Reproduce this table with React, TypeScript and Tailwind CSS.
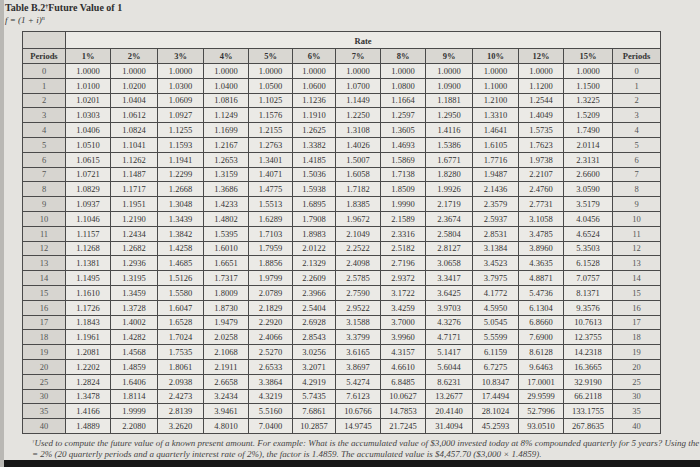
import React from "react";

const periods = [0,1,2,3,4,5,6,7,8,9,10,11,12,13,14,15,16,17,18,19,20,25,30,35,40];
const rates = ["1%","2%","3%","4%","5%","6%","7%","8%","9%","10%","12%","15%"];
const cols: string[][] = [
  "1.0000 1.0100 1.0201 1.0303 1.0406 1.0510 1.0615 1.0721 1.0829 1.0937 1.1046 1.1157 1.1268 1.1381 1.1495 1.1610 1.1726 1.1843 1.1961 1.2081 1.2202 1.2824 1.3478 1.4166 1.4889".split(" "),
  "1.0000 1.0200 1.0404 1.0612 1.0824 1.1041 1.1262 1.1487 1.1717 1.1951 1.2190 1.2434 1.2682 1.2936 1.3195 1.3459 1.3728 1.4002 1.4282 1.4568 1.4859 1.6406 1.8114 1.9999 2.2080".split(" "),
  "1.0000 1.0300 1.0609 1.0927 1.1255 1.1593 1.1941 1.2299 1.2668 1.3048 1.3439 1.3842 1.4258 1.4685 1.5126 1.5580 1.6047 1.6528 1.7024 1.7535 1.8061 2.0938 2.4273 2.8139 3.2620".split(" "),
  "1.0000 1.0400 1.0816 1.1249 1.1699 1.2167 1.2653 1.3159 1.3686 1.4233 1.4802 1.5395 1.6010 1.6651 1.7317 1.8009 1.8730 1.9479 2.0258 2.1068 2.1911 2.6658 3.2434 3.9461 4.8010".split(" "),
  "1.0000 1.0500 1.1025 1.1576 1.2155 1.2763 1.3401 1.4071 1.4775 1.5513 1.6289 1.7103 1.7959 1.8856 1.9799 2.0789 2.1829 2.2920 2.4066 2.5270 2.6533 3.3864 4.3219 5.5160 7.0400".split(" "),
  "1.0000 1.0600 1.1236 1.1910 1.2625 1.3382 1.4185 1.5036 1.5938 1.6895 1.7908 1.8983 2.0122 2.1329 2.2609 2.3966 2.5404 2.6928 2.8543 3.0256 3.2071 4.2919 5.7435 7.6861 10.2857".split(" "),
  "1.0000 1.0700 1.1449 1.2250 1.3108 1.4026 1.5007 1.6058 1.7182 1.8385 1.9672 2.1049 2.2522 2.4098 2.5785 2.7590 2.9522 3.1588 3.3799 3.6165 3.8697 5.4274 7.6123 10.6766 14.9745".split(" "),
  "1.0000 1.0800 1.1664 1.2597 1.3605 1.4693 1.5869 1.7138 1.8509 1.9990 2.1589 2.3316 2.5182 2.7196 2.9372 3.1722 3.4259 3.7000 3.9960 4.3157 4.6610 6.8485 10.0627 14.7853 21.7245".split(" "),
  "1.0000 1.0900 1.1881 1.2950 1.4116 1.5386 1.6771 1.8280 1.9926 2.1719 2.3674 2.5804 2.8127 3.0658 3.3417 3.6425 3.9703 4.3276 4.7171 5.1417 5.6044 8.6231 13.2677 20.4140 31.4094".split(" "),
  "1.0000 1.1000 1.2100 1.3310 1.4641 1.6105 1.7716 1.9487 2.1436 2.3579 2.5937 2.8531 3.1384 3.4523 3.7975 4.1772 4.5950 5.0545 5.5599 6.1159 6.7275 10.8347 17.4494 28.1024 45.2593".split(" "),
  "1.0000 1.1200 1.2544 1.4049 1.5735 1.7623 1.9738 2.2107 2.4760 2.7731 3.1058 3.4785 3.8960 4.3635 4.8871 5.4736 6.1304 6.8660 7.6900 8.6128 9.6463 17.0001 29.9599 52.7996 93.0510".split(" "),
  "1.0000 1.1500 1.3225 1.5209 1.7490 2.0114 2.3131 2.6600 3.0590 3.5179 4.0456 4.6524 5.3503 6.1528 7.0757 8.1371 9.3576 10.7613 12.3755 14.2318 16.3665 32.9190 66.2118 133.1755 267.8635".split(" "),
];
const widths = [43, 45, 47, 46, 45, 44, 43, 45, 45, 47, 46, 45, 49, 48];

export default function App() {
  return (
    <div
      className="w-[700px] h-[467px] overflow-hidden flex flex-col bg-[#e4e3df] text-[#333] border-l-[4px] border-[#b9b8b4]"
      style={{ fontFamily: '"Liberation Serif", "Times New Roman", serif' }}
    >
      <div className="pl-[1px] pt-[2px] flex-1">
        <div className="text-[10px] leading-[12px] font-bold text-[#2e2e2e]">
          Table B.2<sup className="text-[6px]">†</sup>Future Value of 1
        </div>
        <div className="text-[9px] leading-[12px] italic text-[#333]">
          f = (1 + i)<sup className="text-[6px]">n</sup>
        </div>
        <table className="ml-[17px] mt-[5px] border-collapse table-fixed text-[8.5px] text-[#333] w-[638px]">
          <colgroup>
            {widths.map((w, i) => (
              <col key={i} style={{ width: w }} />
            ))}
          </colgroup>
          <tbody>
            <tr className="h-[17px]">
              <td className="border border-[#4a4a4a] bg-[#d9d7d2]"></td>
              <td colSpan={13} className="border border-[#4a4a4a] bg-[#ebeae6] text-center align-bottom font-bold leading-[12px] pb-[1px]">
                Rate
              </td>
            </tr>
            <tr className="h-[15px] font-bold">
              <td className="border border-[#4a4a4a] bg-[#d6d4cf] text-center">Periods</td>
              {rates.map((r) => (
                <td key={r} className="border border-[#4a4a4a] bg-[#d9d7d2] text-center">{r}</td>
              ))}
              <td className="border border-[#4a4a4a] bg-[#d6d4cf] text-center">Periods</td>
            </tr>
            {periods.map((p, ri) => (
              <tr key={p} className="h-[14.8px] leading-[10px]">
                <td className="border border-[#4a4a4a] bg-[#d7d5d0] text-center text-[#555]">{p}</td>
                {cols.map((c, ci) => (
                  <td key={ci} className="border border-[#4a4a4a] bg-[#ebeae6] text-center">{c[ri]}</td>
                ))}
                <td className="border border-[#4a4a4a] bg-[#e4e3df] text-center text-[#555]">{p}</td>
              </tr>
            ))}
          </tbody>
        </table>
        <div className="ml-[27px] mt-[4px] text-[9px] leading-[11px] italic whitespace-nowrap text-[#444]">
          <div>
            <sup className="text-[5px]">†</sup>Used to compute the future value of a known present amount. For example: What is the accumulated value of $3,000 invested today at 8% compounded quarterly for 5 years? Using the factor
          </div>
          <div>
            = 2% (20 quarterly periods and a quarterly interest rate of 2%), the factor is 1.4859. The accumulated value is $4,457.70 ($3,000 × 1.4859).
          </div>
        </div>
      </div>
      <div className="h-[8px] bg-[#161616] shrink-0"></div>
    </div>
  );
}
